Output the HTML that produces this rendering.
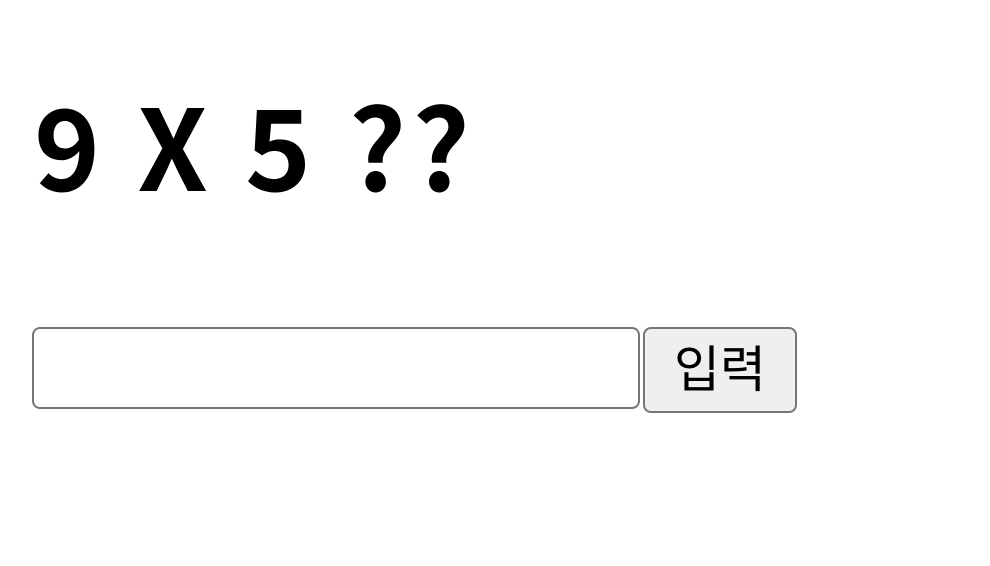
<!DOCTYPE html>
<html><head><meta charset="utf-8"><style>
html,body{margin:0;padding:0;background:#fff;width:990px;height:566px;overflow:hidden}
.h{position:absolute;left:34px;top:87px;font:bold 112px/112px "Noto Sans CJK KR",sans-serif;color:#000;white-space:nowrap;letter-spacing:6px}
.in{position:absolute;left:32px;top:327px;width:604px;height:78px;border:2px solid #767676;border-radius:8px;background:#fff}
.btn{position:absolute;left:643px;top:327px;width:150px;height:82px;border:2px solid #767676;border-radius:8px;background:#efefef;font:400 50px/82px "Liberation Sans","Noto Sans CJK KR",sans-serif;text-align:center;color:#000}
</style></head><body>
<div class="h">9 X 5 ??</div>
<div class="in"></div>
<div class="btn">입력</div>
</body></html>
